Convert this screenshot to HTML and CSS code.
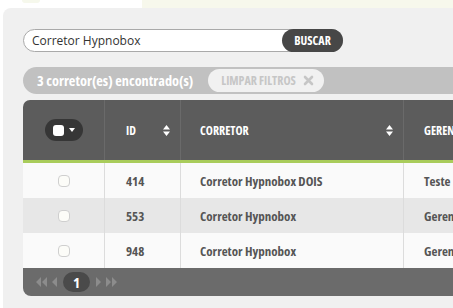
FILE: index.html
```html
<!DOCTYPE html>
<html>
<head>
<meta charset="utf-8">
<link rel="stylesheet" href="styles.css">
</head>
<body>
<div class="topbar"><div class="topbar-left"><span class="tab"></span></div><div class="topbar-right"></div></div>
<div class="panel">
  <form class="search">
    <span class="search-text">Corretor Hypnobox</span>
    <button type="button" class="btn-buscar">BUSCAR</button>
  </form>
  <div class="results">
    <span class="results-count">3 corretor(es) encontrado(s)</span>
    <span class="btn-clear">LIMPAR FILTROS
      <svg width="11" height="11" viewBox="0 0 11 11"><path d="M2 2 L9 9 M9 2 L2 9" stroke="#c6c6c6" stroke-width="2.6" stroke-linecap="round"/></svg>
    </span>
  </div>
  <div class="table">
    <div class="thead">
      <div class="th c-check"><span class="check-pill"><span class="check-box"></span><svg width="6" height="4" viewBox="0 0 6 4"><path d="M0 0 H6 L3 4 Z" fill="#fff"/></svg></span></div>
      <div class="th c-id"><span>ID</span><svg class="sort" width="7" height="11" viewBox="0 0 7 11"><path d="M3.5 0 L7 4.5 H0 Z M3.5 11 L7 6.5 H0 Z" fill="#fff"/></svg></div>
      <div class="th c-name"><span>CORRETOR</span><svg class="sort" width="7" height="11" viewBox="0 0 7 11"><path d="M3.5 0 L7 4.5 H0 Z M3.5 11 L7 6.5 H0 Z" fill="#fff"/></svg></div>
      <div class="th c-rest"><span>GERENTE</span></div>
    </div>
    <div class="tr">
      <div class="td c-check"><span class="row-check"></span></div>
      <div class="td c-id">414</div>
      <div class="td c-name">Corretor Hypnobox DOIS</div>
      <div class="td c-rest">Teste</div>
    </div>
    <div class="tr alt">
      <div class="td c-check"><span class="row-check"></span></div>
      <div class="td c-id">553</div>
      <div class="td c-name">Corretor Hypnobox</div>
      <div class="td c-rest">Gerente</div>
    </div>
    <div class="tr">
      <div class="td c-check"><span class="row-check"></span></div>
      <div class="td c-id">948</div>
      <div class="td c-name">Corretor Hypnobox</div>
      <div class="td c-rest">Gerente</div>
    </div>
    <div class="tfoot">
      <svg class="pg" width="14" height="10" viewBox="0 0 14 10"><path d="M7 0 L2 5 L7 10 Z M13 0 L8 5 L13 10 Z" fill="#8c8c8c"/></svg>
      <svg class="pg" width="6" height="10" viewBox="0 0 6 10"><path d="M6 0 L1 5 L6 10 Z" fill="#8c8c8c"/></svg>
      <span class="page">1</span>
      <svg class="pg" width="6" height="10" viewBox="0 0 6 10"><path d="M0 0 L5 5 L0 10 Z" fill="#8c8c8c"/></svg>
      <svg class="pg" width="14" height="10" viewBox="0 0 14 10"><path d="M1 0 L6 5 L1 10 Z M7 0 L12 5 L7 10 Z" fill="#8c8c8c"/></svg>
    </div>
  </div>
</div>
</body>
</html>
```
FILE: styles.css
```css
html, body {
  margin: 0;
  padding: 0;
  width: 453px;
  height: 308px;
  overflow: hidden;
  background: #ffffff;
}
.topbar {
  display: flex;
  height: 8px;
}
.topbar-left {
  width: 142px;
  background: #ffffff;
  position: relative;
}
.tab {
  position: absolute;
  left: 22px;
  top: 0;
  width: 18px;
  height: 3px;
  background: #f6f8ec;
  border-radius: 0 0 3px 3px;
}
.topbar-right {
  flex: 1;
  background: #f7f8ec;
}
.panel {
  margin-left: 3px;
  width: 450px;
  height: 300px;
  overflow: hidden;
  background: #f0f0f0;
  border-top-left-radius: 8px;
  padding: 21px 0 0 20px;
  box-sizing: border-box;
}
.search {
  margin: 0;
  display: flex;
  align-items: center;
  width: 320px;
  height: 23px;
  box-sizing: border-box;
  border: 1px solid #a9a9a9;
  border-radius: 12px;
  background: #ffffff;
}
.search-text {
  flex: 1;
  padding-left: 8px;
  font-family: "Open Sans", sans-serif;
  font-size: 12px;
  color: #333333;
}
.btn-buscar {
  margin: -1px -1px -1px 0;
  width: 61px;
  height: 23px;
  border: 0;
  border-radius: 12px;
  background: #474747;
  color: #ffffff;
  font-family: "Open Sans", sans-serif;
  font-stretch: 75%;
  font-weight: bold;
  font-size: 12px;
  padding: 0;
}
.results {
  margin-top: 15px;
  width: 600px;
  height: 27px;
  background: #c1c1c1;
  border-radius: 14px 0 0 14px;
  display: flex;
  align-items: center;
  padding-left: 14px;
  box-sizing: border-box;
  font-family: "Open Sans", sans-serif;
  font-stretch: 75%;
  font-weight: bold;
}
.results-count {
  color: #ffffff;
  font-size: 14.3px;
}
.btn-clear {
  margin-left: 15px;
  height: 23px;
  display: flex;
  align-items: center;
  gap: 7px;
  padding: 0 10px 0 13px;
  background: #f1f1f1;
  border-radius: 12px;
  color: #c6c6c6;
  font-size: 12px;
}
.table {
  margin-top: 6px;
  width: 560px;
  font-family: "Open Sans", sans-serif;
  font-stretch: 75%;
  font-weight: bold;
}
.thead {
  display: flex;
  height: 60px;
  background: #5c5c5c;
  border-bottom: 3px solid #a9cc5b;
  border-top-left-radius: 7px;
}
.th {
  display: flex;
  align-items: center;
  color: #ffffff;
  font-size: 12px;
  box-sizing: border-box;
  border-left: 1px solid #6a6a6a;
}
.th.c-check {
  border-left: 0;
  justify-content: center;
}
.c-check { width: 81px; }
.c-id { width: 76px; padding-left: 21px; }
.c-name { width: 223px; padding-left: 19px; }
.c-rest { flex: 1; padding-left: 20px; }
.th.c-id, .th.c-name {
  justify-content: space-between;
  padding-right: 10px;
}
.check-pill {
  width: 38px;
  height: 22px;
  border-radius: 11px;
  background: #363636;
  display: flex;
  align-items: center;
  gap: 5px;
  padding-left: 8px;
  box-sizing: border-box;
}
.check-box {
  width: 11px;
  height: 11px;
  background: #ffffff;
  border-radius: 3px;
}
.tr {
  display: flex;
  height: 35px;
  background: #fafafa;
}
.tr.alt {
  background: #e7e7e7;
}
.td {
  display: flex;
  align-items: center;
  box-sizing: border-box;
  border-left: 1px solid #dcdcdc;
  color: #555555;
  font-size: 13px;
}
.td.c-check {
  border-left: 0;
  justify-content: center;
}
.row-check {
  width: 12px;
  height: 12px;
  box-sizing: border-box;
  border: 1px solid #cfcfcf;
  border-radius: 4px;
  background: #fcfcf8;
}
.tfoot {
  height: 28px;
  background: #6b6b6b;
  border-bottom-left-radius: 8px;
  display: flex;
  align-items: center;
  padding-left: 11px;
  gap: 3px;
}
.page {
  width: 27px;
  height: 20px;
  border-radius: 10px;
  background: #4a4a4a;
  color: #ffffff;
  font-size: 15px;
  display: flex;
  align-items: center;
  justify-content: center;
  margin: 0 3px;
}
```
